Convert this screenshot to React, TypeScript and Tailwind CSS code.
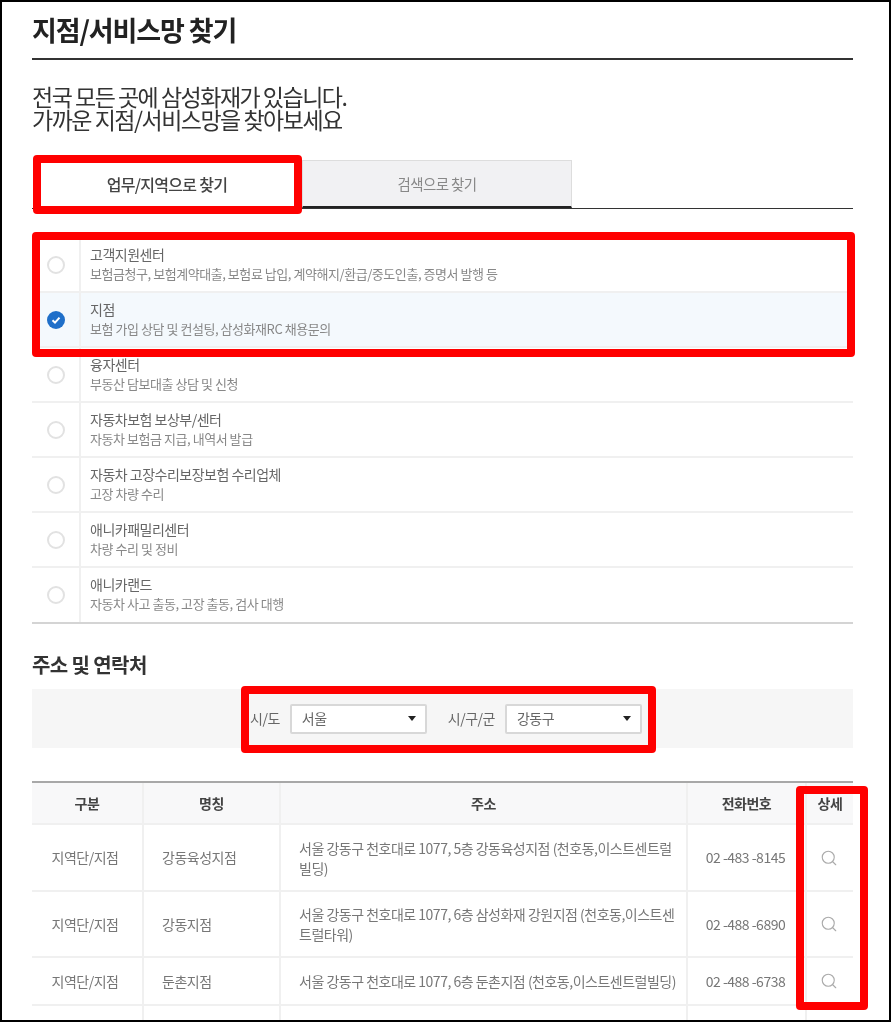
import { Search } from 'lucide-react'

const services = [
  { title: '고객지원센터', desc: '보험금청구, 보험계약대출, 보험료 납입, 계약해지/환급/중도인출, 증명서 발행 등' },
  { title: '지점', desc: '보험 가입 상담 및 컨설팅, 삼성화재RC 채용문의', checked: true },
  { title: '융자센터', desc: '부동산 담보대출 상담 및 신청' },
  { title: '자동차보험 보상부/센터', desc: '자동차 보험금 지급, 내역서 발급' },
  { title: '자동차 고장수리보장보험 수리업체', desc: '고장 차량 수리' },
  { title: '애니카패밀리센터', desc: '차량 수리 및 정비' },
  { title: '애니카랜드', desc: '자동차 사고 출동, 고장 출동, 검사 대행' },
]

const branches = [
  { type: '지역단/지점', name: '강동육성지점', addr: '서울 강동구 천호대로 1077, 5층 강동육성지점 (천호동,이스트센트럴빌딩)', tel: '02 -483 -8145', h: 'h-[67px]' },
  { type: '지역단/지점', name: '강동지점', addr: '서울 강동구 천호대로 1077, 6층 삼성화재 강원지점 (천호동,이스트센트럴타워)', tel: '02 -488 -6890', h: 'h-[66px]' },
  { type: '지역단/지점', name: '둔촌지점', addr: '서울 강동구 천호대로 1077, 6층 둔촌지점 (천호동,이스트센트럴빌딩)', tel: '02 -488 -6738', h: 'h-[48px]' },
]

function Select({ value }: { value: string }) {
  return (
    <div className="flex h-[30px] w-[137px] items-center justify-between rounded-[2px] border-2 border-[#d8d8d8] bg-white pl-[10px] pr-[9px] text-[14px] tracking-[-0.5px] text-[#666]">
      <span>{value}</span>
      <span className="h-0 w-0 border-x-[4px] border-t-[5px] border-x-transparent border-t-[#222]" />
    </div>
  )
}

export default function App() {
  return (
    <div className="relative h-[1022px] w-[891px] overflow-hidden border-2 border-black bg-white font-['Noto_Sans_CJK_KR',sans-serif]">
      <div className="ml-[30px] w-[821px] blur-[0.4px]">
        {/* Title */}
        <h1 className="flex h-[58px] items-center border-b-2 border-[#333] text-[27px] font-bold tracking-[-1.1px] text-[#222]">
          지점/서비스망 찾기
        </h1>

        <p className="mt-[25px] text-[23px] leading-[23px] tracking-[-1.5px] text-[#333]">
          전국 모든 곳에 삼성화재가 있습니다.
          <br />
          가까운 지점/서비스망을 찾아보세요
        </p>

        {/* Tabs */}
        <div className="mt-[29px] flex h-[49px] border-b border-[#333]">
          <div className="flex w-[270px] items-center justify-center text-[16px] font-medium tracking-[-0.7px] text-[#444]">
            업무/지역으로 찾기
          </div>
          <div className="flex w-[270px] items-center justify-center border-x border-t border-[#ddd] border-b-2 border-b-[#222] bg-[#f1f1f3] text-[14.5px] tracking-[-0.6px] text-[#888]">
            검색으로 찾기
          </div>
        </div>

        {/* Service list */}
        <ul className="mt-[29px] border-b-2 border-[#d4d4d4]">
          {services.map((s) => (
            <li
              key={s.title}
              className={`flex h-[55px] border-b-2 border-[#f0f0f0] last:h-[54px] last:border-b-0 ${s.checked ? 'bg-[#f4f9fd]' : ''}`}
            >
              <div className="flex w-[49px] shrink-0 items-center justify-center border-r-2 border-[#f0f0f0]">
                {s.checked ? (
                  <span className="flex size-[18px] items-center justify-center rounded-full bg-[#1f6fc9]">
                    <svg viewBox="0 0 12 12" className="size-[12px]" fill="none" stroke="white" strokeWidth="2">
                      <path d="M2.5 6.2 5 8.6 9.5 3.6" />
                    </svg>
                  </span>
                ) : (
                  <span className="size-[18px] rounded-full border-2 border-[#e2e2e2] bg-white" />
                )}
              </div>
              <div className="pl-[9px] pt-[5px]">
                <div className="text-[14px] leading-[22px] tracking-[-0.5px] text-[#666]">{s.title}</div>
                <div className="text-[13px] leading-[17px] tracking-[-0.45px] text-[#888]">{s.desc}</div>
              </div>
            </li>
          ))}
        </ul>

        <h2 className="mt-[26px] text-[20px] font-bold leading-[30px] tracking-[-0.6px] text-[#333]">주소 및 연락처</h2>

        {/* Filters */}
        <div className="mt-[9px] flex h-[59px] items-center justify-center gap-[21px] bg-[#f6f6f6] pl-[7px]">
          <div className="flex items-center gap-[10px]">
            <span className="text-[14px] tracking-[-0.5px] text-[#666]">시/도</span>
            <Select value="서울" />
          </div>
          <div className="flex items-center gap-[10px]">
            <span className="text-[14px] tracking-[-0.5px] text-[#666]">시/구/군</span>
            <Select value="강동구" />
          </div>
        </div>

        {/* Branch table */}
        <div className="mt-[33px] border-t-2 border-[#a8a8a8] text-[14px] tracking-[-0.5px] text-[#777]">
          <div className="flex h-[42px] border-b-2 border-[#f0f0f0] bg-[#f8f8f9] font-bold text-[#444]">
            <div className="flex w-[112px] items-center justify-center border-r-2 border-[#f0f0f0]">구분</div>
            <div className="flex w-[137px] items-center justify-center border-r-2 border-[#f0f0f0]">명칭</div>
            <div className="flex w-[407px] items-center justify-center border-r-2 border-[#f0f0f0]">주소</div>
            <div className="flex w-[119px] items-center justify-center border-r-2 border-[#f0f0f0]">전화번호</div>
            <div className="flex w-[46px] items-center justify-center">상세</div>
          </div>
          {branches.map((b) => (
            <div key={b.name} className={`flex ${b.h} border-b-2 border-[#f0f0f0]`}>
              <div className="flex w-[112px] items-center justify-center border-r-2 border-[#f0f0f0] pr-[4px]">{b.type}</div>
              <div className="flex w-[137px] items-center border-r-2 border-[#f0f0f0] pl-[18px]">{b.name}</div>
              <div className="flex w-[407px] items-center break-all border-r-2 border-[#f0f0f0] pl-[18px] pr-[10px] leading-[20px]">{b.addr}</div>
              <div className="flex w-[119px] items-center justify-center border-r-2 border-[#f0f0f0] pr-[2px]">{b.tel}</div>
              <div className="flex w-[46px] items-center justify-center pr-[2px]">
                <Search className="size-[18px] text-[#aaa]" strokeWidth={1.5} />
              </div>
            </div>
          ))}
          <div className="flex h-[20px]">
            <div className="w-[112px] border-r-2 border-[#f0f0f0]" />
            <div className="w-[137px] border-r-2 border-[#f0f0f0]" />
            <div className="w-[407px] border-r-2 border-[#f0f0f0]" />
            <div className="w-[119px] border-r-2 border-[#f0f0f0]" />
          </div>
        </div>
      </div>

      {/* Red annotation boxes over the screenshot */}
      <div className="absolute left-[31px] top-[153px] h-[59px] w-[269px] rounded-[4px] border-[8px] border-[#ff0000]" />
      <div className="absolute left-[30px] top-[230px] h-[125px] w-[823px] rounded-[4px] border-[8px] border-[#ff0000]" />
      <div className="absolute left-[239px] top-[684px] h-[67px] w-[415px] rounded-[4px] border-[8px] border-[#ff0000]" />
      <div className="absolute left-[794px] top-[784px] h-[224px] w-[72px] rounded-[4px] border-[8px] border-[#ff0000]" />
    </div>
  )
}
